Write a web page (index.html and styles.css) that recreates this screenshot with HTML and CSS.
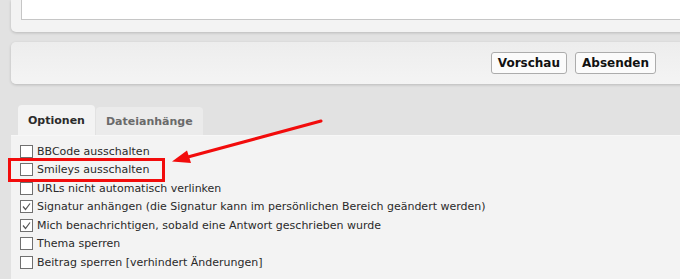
FILE: index.html
```html
<!doctype html>
<html lang="de">
	<head>
		<meta charset="utf-8">
		<title>Antwort erstellen</title>
		<link rel="stylesheet" href="styles.css">
	</head>
	<body>
		<div class="page">
			<div class="panel editor">
				<div class="textarea"></div>
			</div>
			<div class="panel submit-bar">
				<button class="btn">Vorschau</button>
				<button class="btn">Absenden</button>
			</div>
			<div class="tabs">
				<div class="tab active">Optionen</div>
				<div class="tab">Dateianhänge</div>
			</div>
			<div class="options">
				<div class="opt"><span class="box"></span>BBCode ausschalten</div>
				<div class="opt"><span class="box"></span>Smileys ausschalten</div>
				<div class="opt"><span class="box"></span>URLs nicht automatisch verlinken</div>
				<div class="opt"><span class="box"><svg width="11" height="11" viewBox="0 0 11 11"><polyline points="2,5.5 4.5,8.5 9,2.5" fill="none" stroke="#555" stroke-width="1.2"/></svg></span>Signatur anhängen (die Signatur kann im persönlichen Bereich geändert werden)</div>
				<div class="opt"><span class="box"><svg width="11" height="11" viewBox="0 0 11 11"><polyline points="2,5.5 4.5,8.5 9,2.5" fill="none" stroke="#555" stroke-width="1.2"/></svg></span>Mich benachrichtigen, sobald eine Antwort geschrieben wurde</div>
				<div class="opt"><span class="box"></span>Thema sperren</div>
				<div class="opt"><span class="box"></span>Beitrag sperren [verhindert Änderungen]</div>
			</div>

			<!-- annotation -->
			<div class="mark"></div>
			<svg class="arrow" width="680" height="279" viewBox="0 0 680 279">
				<line x1="321" y1="121" x2="186" y2="157.5" stroke="#f20c0c" stroke-width="3" stroke-linecap="round"/>
				<polygon points="172,161.5 191,163 187,150.5" fill="#f20c0c"/>
			</svg>
		</div>
	</body>
</html>
```

FILE: styles.css
```css
html, body {
	margin: 0;
	overflow: hidden;
}

body {
	background: #e2e2e2;
	font-family: "DejaVu Sans", Verdana, sans-serif;
	font-size: 11px;
	color: #2a2a2a;
}

.page {
	position: relative;
	width: 680px;
	height: 279px;
}

.panel {
	margin-left: 11px;
	width: 690px;
	background: #f3f3f3;
	border-radius: 5px;
	box-shadow: 0 1px 3px rgba(0,0,0,0.18);
	box-sizing: border-box;
}

.editor {
	height: 32px;
	padding: 0 0 0 10px;
	border-top-left-radius: 0;
	border-top-right-radius: 0;
}

.textarea {
	height: 20px;
	background: #fff;
	border: 1px solid #c6c6c6;
	border-top: none;
	box-sizing: border-box;
}

.submit-bar {
	margin-top: 10px;
	height: 42px;
	display: flex;
	justify-content: flex-end;
	align-items: center;
	gap: 8px;
	padding-right: 45px;
	background: linear-gradient(#ededed, #f4f4f4);
}

.btn {
	height: 22px;
	padding: 0 6px;
	font-family: "DejaVu Sans", Verdana, sans-serif;
	font-size: 12px;
	font-weight: bold;
	color: #111;
	background: #fbfbfb;
	border: 1px solid #acacac;
	border-radius: 3px;
}

.tabs {
	display: flex;
	align-items: flex-end;
	gap: 1px;
	margin: 21px 0 0 18px;
	height: 30px;
}

.tab {
	height: 28px;
	padding: 0 10px;
	display: flex;
	align-items: center;
	font-weight: bold;
	color: #6a6a6a;
	background: #ebebeb;
	border-radius: 4px 4px 0 0;
}

.tab.active {
	height: 30px;
	padding: 0 10px;
	color: #2b2b2b;
	background: #f3f3f3;
}

.options {
	margin-left: 11px;
	padding: 6px 0 0 9px;
	height: 150px;
	background: #f3f3f3;
	border-top: 1px solid #f7f7f7;
}

.opt {
	height: 18.5px;
	display: flex;
	align-items: center;
	gap: 4px;
	white-space: nowrap;
}

.box {
	width: 13px;
	height: 13px;
	box-sizing: border-box;
	border: 1px solid #707070;
	background: #fff;
	display: flex;
	align-items: center;
	justify-content: center;
}

.mark {
	position: absolute;
	left: 8px;
	top: 158px;
	width: 157px;
	height: 24px;
	box-sizing: border-box;
	border: 3px solid #f20c0c;
}

.arrow {
	position: absolute;
	left: 0;
	top: 0;
	pointer-events: none;
}
```
